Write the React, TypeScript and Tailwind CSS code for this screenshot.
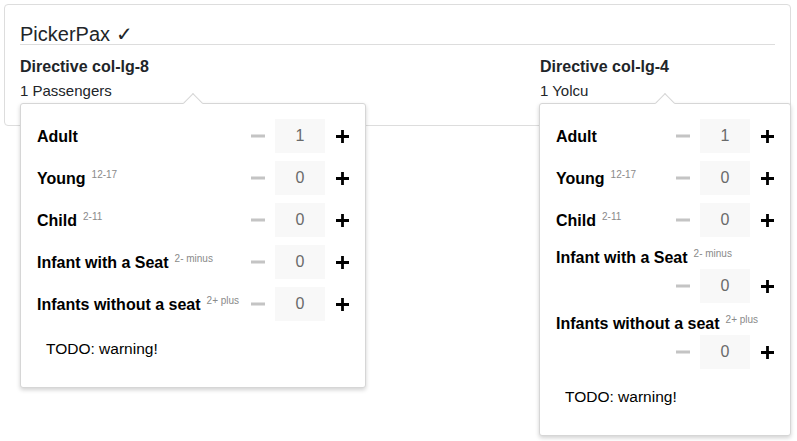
import { useState } from "react";

type Pax = { label: string; range?: string; value: number };

const initial: Pax[] = [
  { label: "Adult", value: 1 },
  { label: "Young", range: "12-17", value: 0 },
  { label: "Child", range: "2-11", value: 0 },
  { label: "Infant with a Seat", range: "2- minus", value: 0 },
  { label: "Infants without a seat", range: "2+ plus", value: 0 },
];

const MinusIcon = () => (
  <svg width="14" height="14" viewBox="0 0 14 14" className="shrink-0">
    <rect x="0" y="5.5" width="14" height="3" fill="#c4c4c4" />
  </svg>
);

const PlusIcon = () => (
  <svg width="13" height="13" viewBox="0 0 13 13" className="shrink-0">
    <path d="M6.5 0v13M0 6.5h13" stroke="#000" strokeWidth="2.8" />
  </svg>
);

const PaxRow = ({ pax }: { pax: Pax }) => {
  return (
    <div className="flex flex-wrap items-center">
      <span className="pt-[2px] text-[16px] leading-[22px] font-bold text-black whitespace-nowrap">
        {pax.label}
        {pax.range && (
          <sup className="ml-[6px] text-[10px] font-normal text-[#8a8a8a] top-[-0.6em]">
            {pax.range}
          </sup>
        )}
      </span>
      <div className="ml-auto flex items-center h-[34px]">
        <MinusIcon />
        <input
          readOnly
          value={pax.value}
          className="ml-[10px] w-[50px] h-[34px] bg-[#f8f8f8] text-center text-[16px] text-[#6a6a6a] border-0 outline-none"
        />
        <span className="ml-[11px] flex">
          <PlusIcon />
        </span>
      </div>
    </div>
  );
};

const Picker = (props: { title: string; summary: string; popClass: string }) => {
  const [rows] = useState(initial);
  return (
    <div className="relative">
      <div className="text-[16px] leading-6 font-bold">{props.title}</div>
      <div className="text-[15px] leading-6">{props.summary}</div>
      <div
        className={`absolute top-full z-10 bg-white border border-[#d6d6d6] rounded-[3px] shadow-[0_2px_4px_rgba(0,0,0,0.18)] pt-[15px] px-4 pb-[14px] ${props.popClass}`}
      >
        <div className="absolute -top-[8px] left-[calc(50%-7px)] w-[14px] h-[14px] rotate-45 bg-white border-l border-t border-[#d6d6d6]" />
        <div className="flex flex-col gap-2">
          {rows.map((p) => (
            <PaxRow key={p.label} pax={p} />
          ))}
        </div>
        <div className="mt-1 py-3 px-[9px] text-[15.5px] leading-6 text-black">
          TODO: warning!
        </div>
      </div>
    </div>
  );
};

export default function App() {
  return (
    <div className="min-h-screen bg-white pt-1 pl-1 pr-[6px] font-['Liberation_Sans',Arial,sans-serif] text-[#212529]">
      <div className="border border-[#dddddd] rounded-[4px] px-[15px] pt-[19px] pb-[22px]">
        <h1 className="text-[20px] leading-[20px] font-normal border-b border-[#dddddd]">
          PickerPax ✓
        </h1>
        <div className="flex mt-[10px]">
          <div className="w-[520px]">
            <Picker title="Directive col-lg-8" summary="1 Passengers" popClass="left-0 w-[346px]" />
          </div>
          <div className="flex-1">
            <Picker title="Directive col-lg-4" summary="1 Yolcu" popClass="-left-px w-[252px]" />
          </div>
        </div>
      </div>
    </div>
  );
}
